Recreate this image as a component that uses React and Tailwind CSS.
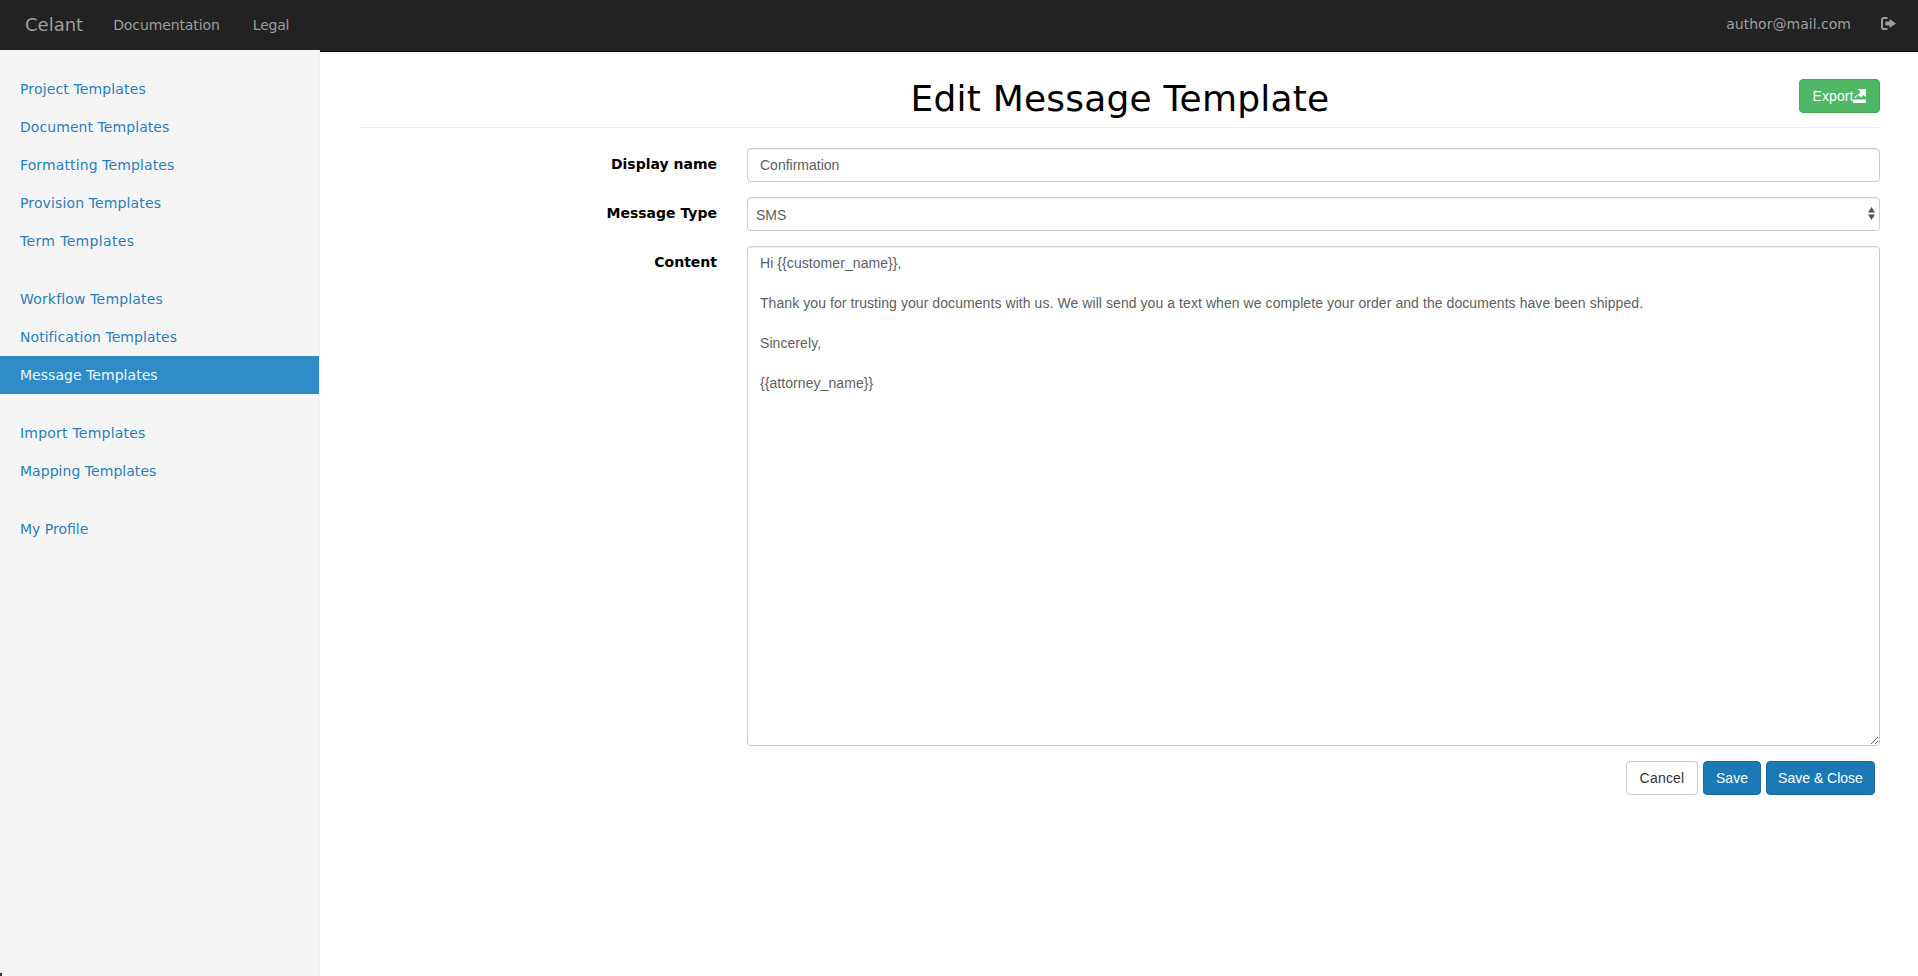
const dejavu = "font-['DejaVu_Sans',sans-serif]";

const groups = [
  [
    ["Project Templates", "tracking-[0.14px]"],
    ["Document Templates", "tracking-[0.07px]"],
    ["Formatting Templates", "tracking-[0.12px]"],
    ["Provision Templates", "tracking-[0.13px]"],
    ["Term Templates", "tracking-[0.35px]"],
  ],
  [
    ["Workflow Templates", "tracking-[0.17px]"],
    ["Notification Templates", "tracking-[0.05px]"],
    ["Message Templates", "tracking-[0.04px]"],
  ],
  [
    ["Import Templates", "tracking-[0.22px]"],
    ["Mapping Templates", "tracking-[0.04px]"],
  ],
  [["My Profile", "tracking-normal"]],
];

function LogoutIcon() {
  return (
    <svg width="15" height="13" viewBox="0 0 15 13" className="text-[#9d9d9d]" fill="currentColor">
      <path d="M0 2.6C0 1.2 1.1 0 2.6 0H6.5v2H2.9c-.6 0-.9.4-.9.9v7.2c0 .5.3.9.9.9h3.6v2H2.6C1.1 13 0 11.8 0 10.4V2.6Z" />
      <path d="M8.6 1.9 15 6.5l-6.4 4.6V8.6H4.4V4.4h4.2V1.9Z" />
    </svg>
  );
}

function ExportIcon() {
  return (
    <svg width="13" height="14" viewBox="0 0 13 14" fill="white" className="shrink-0">
      <path d="M4.5 0H13v8.2l-2.4-2.4-2.7 2.7-2.9-2.9 2.7-2.7L4.5 0Z" />
      <path d="M1.7 7.6h1.5v1.5H1.7zM3.2 6h1.5v1.6H3.2z" />
      <path d="M0 10.5h13V14H0z" />
    </svg>
  );
}

function Field({ label, children }) {
  return (
    <div className="flex">
      <label className={`w-[387px] pr-[30px] pt-[6px] text-right text-sm font-bold leading-5 text-black ${dejavu}`}>{label}</label>
      <div className="flex-1">{children}</div>
    </div>
  );
}

const content = `Hi {{customer_name}},

Thank you for trusting your documents with us. We will send you a text when we complete your order and the documents have been shipped.

Sincerely,

{{attorney_name}}`;

export default function App() {
  return (
    <div className="relative flex h-[976px] flex-col overflow-hidden bg-white">
      <header className={`flex h-[52px] shrink-0 items-start border-b border-[#080808] bg-[#222] text-[#9d9d9d] ${dejavu}`}>
        <span className="ml-[25px] mt-[15px] text-lg leading-5">Celant</span>
        <span className="ml-[30px] mt-[15px] text-sm leading-5 tracking-[-0.1px]">Documentation</span>
        <span className="ml-[33px] mt-[15px] text-sm leading-5 tracking-[-0.2px]">Legal</span>
        <span className="ml-auto mt-[14px] text-sm leading-5 tracking-[0.02px]">author@mail.com</span>
        <span className="ml-[30px] mr-[22px] mt-[17px]"><LogoutIcon /></span>
      </header>
      <div className="flex min-h-0 flex-1">
        <aside className={`-mt-0.5 z-10 flex w-[320px] shrink-0 flex-col gap-5 border-r border-[#eee] bg-[#f5f5f5] pt-5 ${dejavu}`}>
          {groups.map((g, i) => (
            <ul key={i} className="flex flex-col">
              {g.map(([name, spacing]) => (
                <li
                  key={name}
                  className={`h-[38px] pl-5 pt-2.5 text-sm leading-[18px] ${spacing} ${
                    name === "Message Templates" ? "bg-[#2f8cc9] text-[#f0f7fc]" : "text-[#2980b9]"
                  }`}
                >
                  {name}
                </li>
              ))}
            </ul>
          ))}
        </aside>
        <main className="flex-1 pl-10 pr-[38px]">
          <div className="relative h-[76px] border-b border-[#eee]">
            <h1 className={`pt-[27px] text-center text-4xl leading-10 font-normal tracking-[0.2px] text-black ${dejavu}`}>Edit Message Template</h1>
            <button className="absolute right-0 top-[27px] flex h-[34px] w-[81px] items-center justify-center rounded border border-[#46a55c] bg-[#50b766] font-['Liberation_Sans',sans-serif] text-sm tracking-[0.05px] text-white">
              Export<ExportIcon />
            </button>
          </div>
          <form className="flex flex-col gap-[15px] pt-5 font-['Liberation_Sans',sans-serif] text-sm text-[#606060]">
            <Field label="Display name">
              <div className="flex h-[34px] items-center rounded border border-[#ccc] px-3 shadow-[inset_0_1px_1px_rgba(0,0,0,0.075)]">Confirmation</div>
            </Field>
            <Field label="Message Type">
              <div className="relative flex h-[34px] items-center rounded border border-[#ccc] pl-2 pt-0.5 shadow-[inset_0_1px_1px_rgba(0,0,0,0.075)]">
                SMS
                <svg width="7" height="13" viewBox="0 0 7 13" fill="#555" className="absolute right-1 top-[9px]">
                  <path d="M3.5 0 7 5.5H0ZM0 7.5h7L3.5 13Z" />
                </svg>
              </div>
            </Field>
            <Field label="Content">
              <textarea
                readOnly
                value={content}
                className="block h-[500px] w-full rounded border border-[#ccc] px-3 py-1.5 leading-5 tracking-[0.07px] text-[#606060] shadow-[inset_0_1px_1px_rgba(0,0,0,0.075)] outline-none"
              />
            </Field>
          </form>
          <div className="mt-[15px] flex justify-end gap-[5px] pr-[5px] font-['Liberation_Sans',sans-serif] text-sm">
            <button className="h-[34px] w-[72px] rounded border border-[#ccc] bg-white tracking-[0.2px] text-[#333]">Cancel</button>
            <button className="h-[34px] w-[58px] rounded border border-[#19699c] bg-[#1b7ab5] text-white">Save</button>
            <button className="h-[34px] w-[109px] rounded border border-[#19699c] bg-[#1b7ab5] text-white">Save &amp; Close</button>
          </div>
        </main>
      </div>
      <div className="absolute bottom-0 left-0 z-20 h-[3px] w-[2px] bg-[#333]" />
    </div>
  );
}
